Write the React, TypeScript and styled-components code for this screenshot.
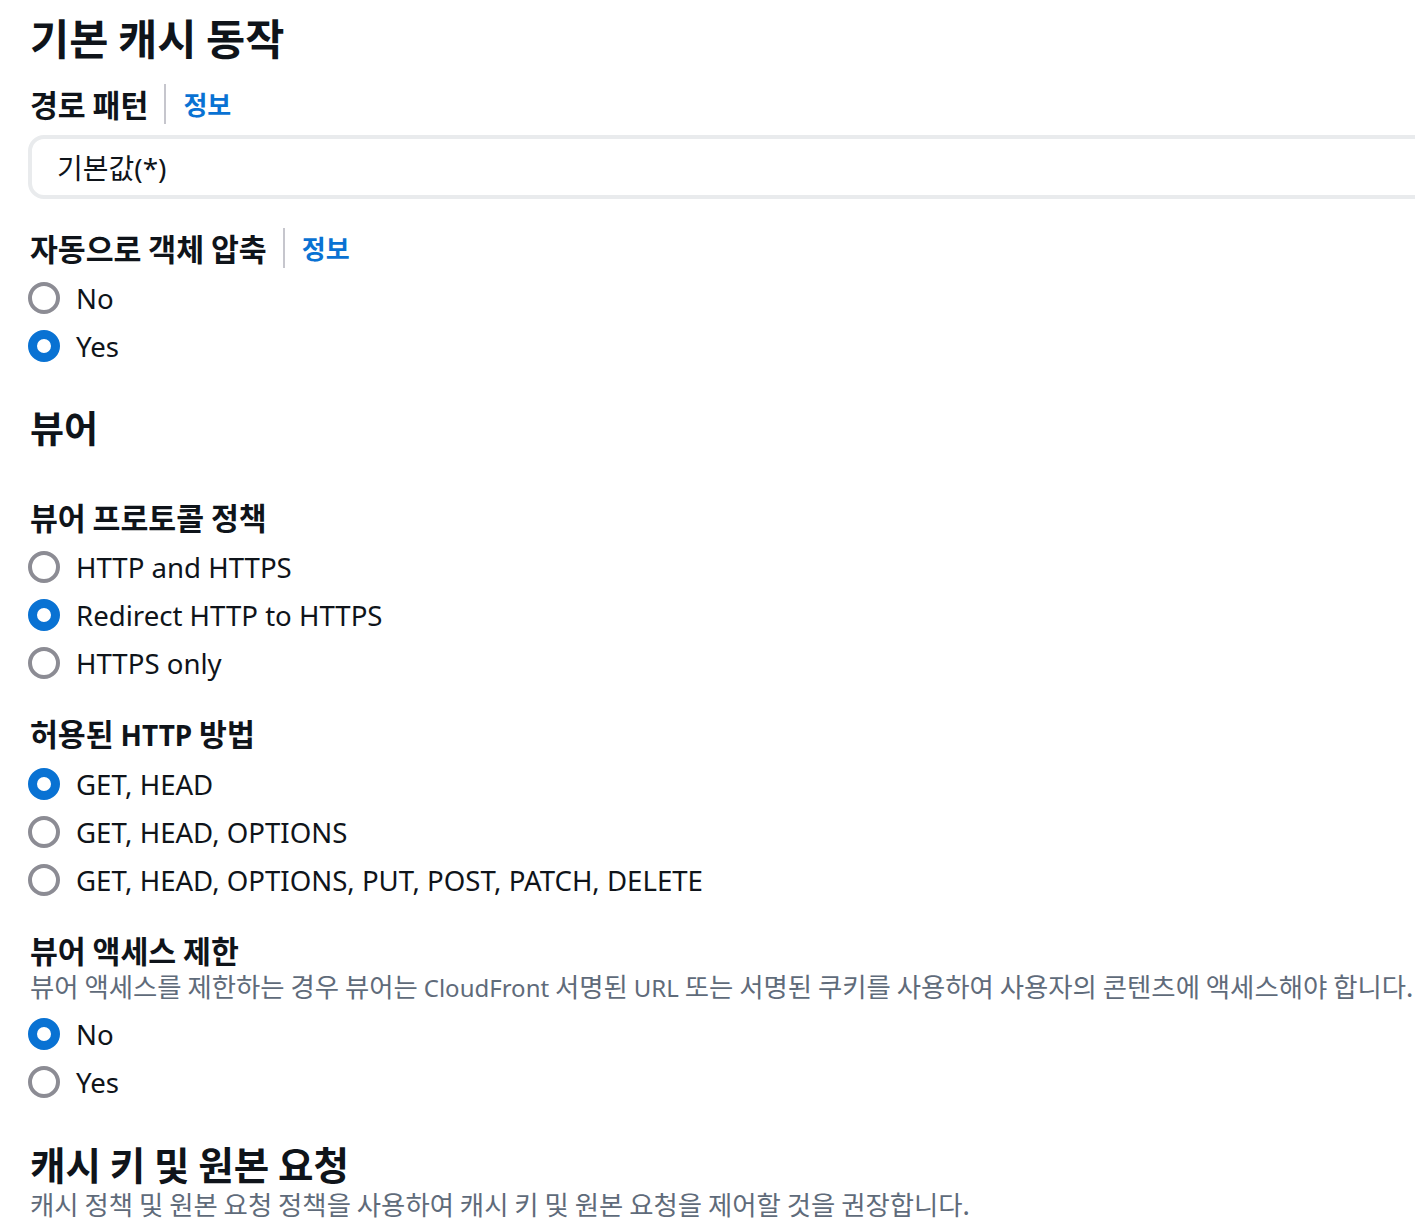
import React from "react";
import styled, { createGlobalStyle } from "styled-components";

const GlobalStyle = createGlobalStyle`
  html, body {
    margin: 0;
    padding: 0;
    background: #ffffff;
    overflow: hidden;
  }
  body {
    font-family: "Noto Sans", "Noto Sans CJK KR", sans-serif;
    color: #0f141a;
  }
`;

const Page = styled.div`
  width: 1415px;
  overflow: hidden;
  padding: 13px 0 0 28px;
  box-sizing: border-box;
`;

const Heading = styled.h2<{ size?: number; top?: number }>`
  margin: ${({ top }) => top ?? 0}px 0 0 2px;
  font-family: "Noto Sans CJK KR", "Noto Sans", sans-serif;
  font-size: ${({ size }) => size ?? 42.6}px;
  font-weight: 700;
  line-height: 48px;
  color: #0f141a;
  white-space: nowrap;
`;

const LabelRow = styled.div<{ top: number }>`
  display: flex;
  align-items: center;
  height: 40px;
  margin-top: ${({ top }) => top}px;
  padding-left: 2px;
`;

const Label = styled.span`
  font-family: "Noto Sans CJK KR", "Noto Sans", sans-serif;
  font-size: 30.3px;
  line-height: 40px;
  font-weight: 700;
  color: #0f141a;
  white-space: nowrap;
`;

const Latin = styled.span<{ size: number }>`
  font-family: "Noto Sans", sans-serif;
  font-size: ${({ size }) => size}px;
`;

const Divider = styled.span`
  width: 2px;
  align-self: stretch;
  background: #c6c6cd;
  margin: 0 17px 0 16px;
`;

const InfoLink = styled.a`
  font-family: "Noto Sans CJK KR", sans-serif;
  font-size: 26px;
  line-height: 40px;
  font-weight: 700;
  color: #0972d3;
  text-decoration: none;
  cursor: pointer;
`;

const Description = styled.p<{ top?: number }>`
  margin: ${({ top }) => top ?? 0}px 0 0 0;
  padding-left: 2px;
  font-family: "Noto Sans CJK KR", "Noto Sans", sans-serif;
  font-size: 26.4px;
  line-height: 32px;
  color: #5f6b7a;
  white-space: nowrap;
`;

const Input = styled.div`
  margin-top: 11px;
  width: 1440px;
  height: 64px;
  box-sizing: border-box;
  border: 4px solid #e9ebed;
  border-radius: 16px;
  display: flex;
  align-items: center;
  padding-left: 25px;
  font-size: 28px;
  color: #0f141a;
`;

const RadioGroup = styled.div`
  display: flex;
  flex-direction: column;
  margin-top: 6px;
`;

const RadioRow = styled.label`
  display: flex;
  align-items: center;
  height: 48px;
  gap: 16px;
  cursor: pointer;
`;

const Circle = styled.span<{ checked: boolean }>`
  width: 32px;
  height: 32px;
  box-sizing: border-box;
  border-radius: 50%;
  flex: none;
  border: ${({ checked }) => (checked ? "9px solid #0972d3" : "4px solid #8c8c94")};
  background: #ffffff;
`;

const RadioText = styled.span`
  font-size: 27.6px;
  color: #0f141a;
  white-space: nowrap;
`;

type RadioProps = { options: string[]; selected: number };

const Radios: React.FC<RadioProps> = ({ options, selected }) => (
  <RadioGroup>
    {options.map((o, i) => (
      <RadioRow key={o}>
        <Circle checked={i === selected} />
        <RadioText>{o}</RadioText>
      </RadioRow>
    ))}
  </RadioGroup>
);

export default function App() {
  return (
    <Page>
      <GlobalStyle />
      <Heading>기본 캐시 동작</Heading>

      <LabelRow top={23}>
        <Label>경로 패턴</Label>
        <Divider />
        <InfoLink>정보</InfoLink>
      </LabelRow>
      <Input>기본값(*)</Input>

      <LabelRow top={29}>
        <Label>자동으로 객체 압축</Label>
        <Divider />
        <InfoLink>정보</InfoLink>
      </LabelRow>
      <Radios options={["No", "Yes"]} selected={1} />

      <Heading size={37} top={33}>
        뷰어
      </Heading>

      <LabelRow top={46}>
        <Label>뷰어 프로토콜 정책</Label>
      </LabelRow>
      <Radios
        options={["HTTP and HTTPS", "Redirect HTTP to HTTPS", "HTTPS only"]}
        selected={1}
      />

      <LabelRow top={27}>
        <Label>
          허용된 <Latin size={28}>HTTP</Latin> 방법
        </Label>
      </LabelRow>
      <Radios
        options={[
          "GET, HEAD",
          "GET, HEAD, OPTIONS",
          "GET, HEAD, OPTIONS, PUT, POST, PATCH, DELETE",
        ]}
        selected={0}
      />

      <LabelRow top={26}>
        <Label>뷰어 액세스 제한</Label>
      </LabelRow>
      <Description>
        뷰어 액세스를 제한하는 경우 뷰어는 <Latin size={24}>CloudFront</Latin> 서명된{" "}
        <Latin size={24}>URL</Latin> 또는 서명된 쿠키를 사용하여 사용자의 콘텐츠에 액세스해야 합니다.
      </Description>
      <Radios options={["No", "Yes"]} selected={0} />

      <Heading size={38.6} top={33}>
        캐시 키 및 원본 요청
      </Heading>
      <Description top={1}>
        캐시 정책 및 원본 요청 정책을 사용하여 캐시 키 및 원본 요청을 제어할 것을 권장합니다.
      </Description>
    </Page>
  );
}
